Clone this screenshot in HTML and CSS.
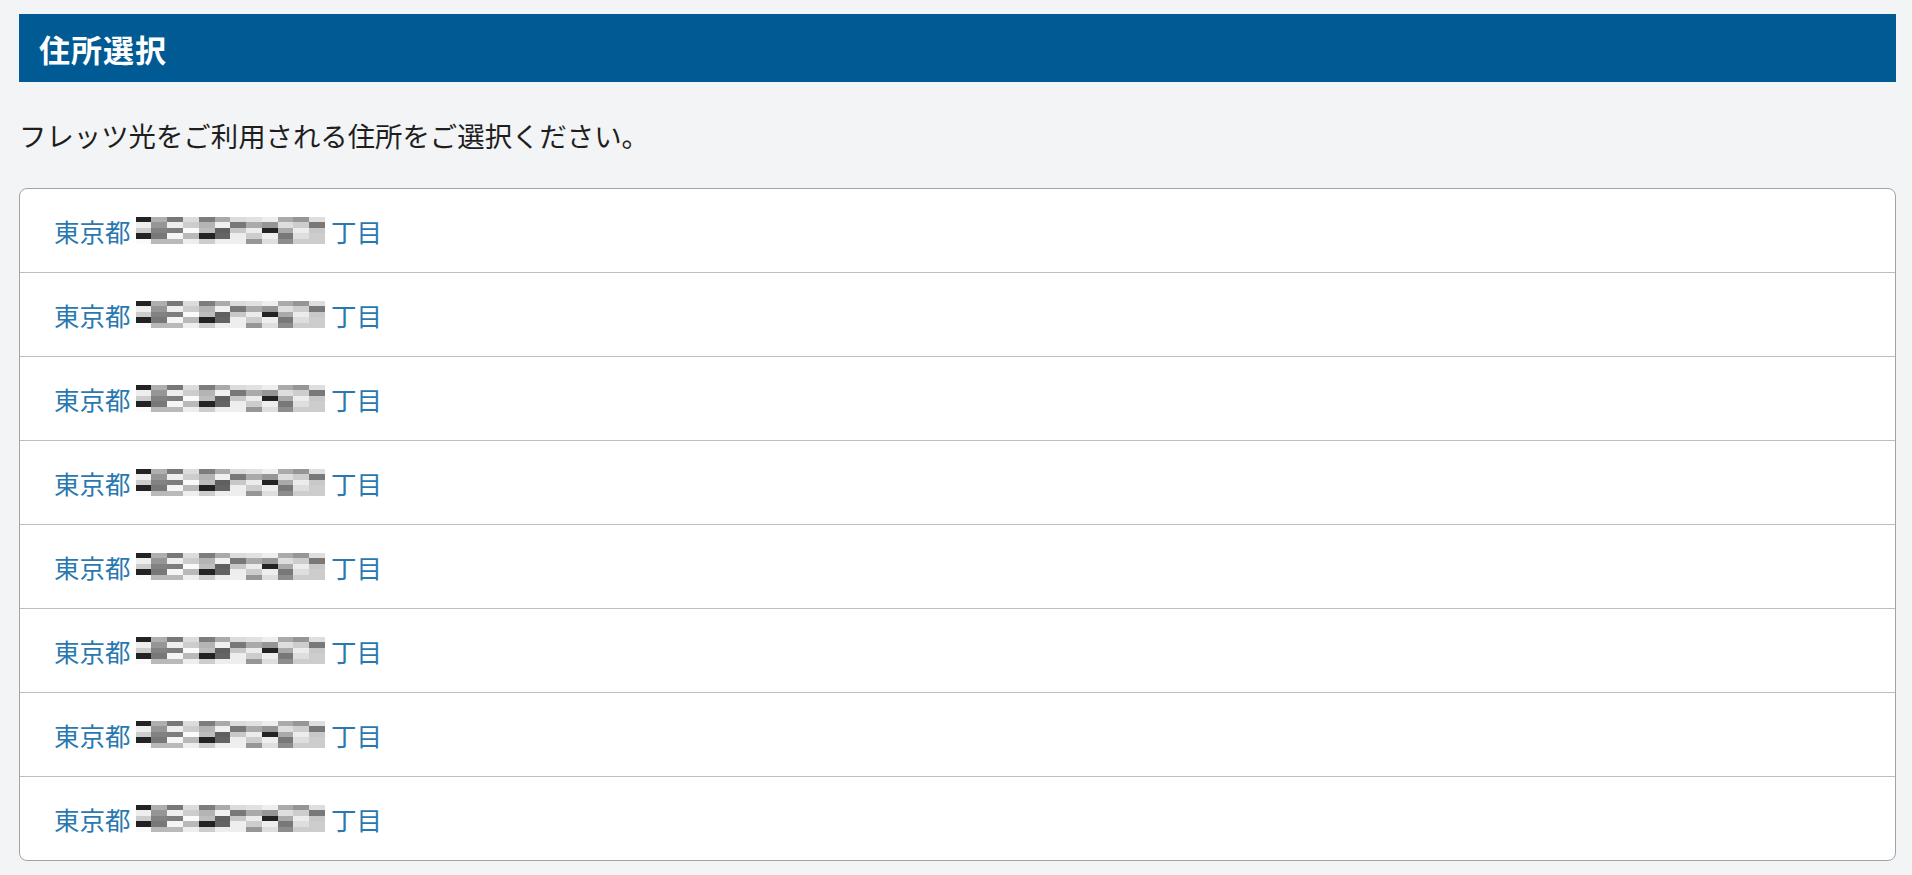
FILE: index.html
```html
<!DOCTYPE html>
<html lang="ja">
<head>
    <meta charset="UTF-8">
    <meta name="viewport" content="width=device-width, initial-scale=1.0">
    <title>住所選択</title>
    <link rel="stylesheet" href="styles.css">
</head>
<body>

    <div class="page">
        <header class="page-title">
            <h1>住所選択</h1>
        </header>

        <p class="lead">フレッツ光をご利用される住所をご選択ください。</p>

        <!-- Address candidates -->
        <ul class="address-list" id="addressList"></ul>
    </div>

    <script>
        // masked part of the address (grey levels, 12 x 5 cells)
        var mask = [
            [35, 175, 120, 220, 125, 170, 220, 225, 238, 170, 150, 222],
            [238, 150, 238, 205, 180, 240, 120, 170, 150, 222, 205, 120],
            [205, 130, 125, 250, 190, 95, 200, 236, 35, 170, 236, 200],
            [35, 120, 245, 185, 35, 100, 238, 205, 238, 120, 222, 205],
            [250, 185, 185, 238, 205, 238, 238, 150, 222, 140, 205, 205]
        ];

        function buildMask() {
            var box = document.createElement("span");
            box.className = "mask";
            mask.forEach(function (row) {
                row.forEach(function (v) {
                    var cell = document.createElement("i");
                    cell.style.background = "rgb(" + v + "," + v + "," + v + ")";
                    box.appendChild(cell);
                });
            });
            return box;
        }

        function addAddress(pref, rest) {
            var li = document.createElement("li");
            var a = document.createElement("a");
            a.href = "#";
            a.appendChild(document.createTextNode(pref));
            a.appendChild(buildMask());
            a.appendChild(document.createTextNode(rest));
            li.appendChild(a);
            document.getElementById("addressList").appendChild(li);
        }

        for (var i = 0; i < 8; i++) {
            addAddress("東京都", "丁目");
        }
    </script>

</body>
</html>
```

FILE: styles.css
```css
body {
    margin: 0;
    padding: 0;
    background-color: #f3f4f6;
    font-family: "Noto Sans CJK JP", "Noto Sans", sans-serif;
    color: #222;
}

.page {
    display: flex;
    flex-direction: column;
    padding: 14px 16px 0 19px;
}

.page-title {
    background-color: #005a93;
    height: 68px;
    display: flex;
    align-items: center;
    padding-left: 20px;
}
.page-title h1 {
    margin: 0;
    color: #fff;
    font-size: 31px;
    font-weight: bold;
    letter-spacing: 1px;
}

.lead {
    margin: 33px 0 33px 0;
    font-size: 27.4px;
    line-height: 40px;
    color: #1e1e1e;
}

.address-list {
    list-style: none;
    margin: 0;
    padding: 0;
    background: #fff;
    border: 1px solid #a3a3a3;
    border-radius: 8px;
}
.address-list li {
    height: 83px;
    display: flex;
    align-items: center;
    padding-left: 34px;
    border-top: 1px solid #bdbdbd;
}
.address-list li:first-child {
    border-top: none;
}
.address-list a {
    display: flex;
    align-items: center;
    color: #2a78b0;
    font-size: 25.5px;
    text-decoration: none;
}

.mask {
    display: grid;
    grid-template-columns: repeat(12, 15.8px);
    grid-template-rows: repeat(5, 5.6px);
    margin: 0 6px 0 5px;
    filter: blur(0.4px);
}
.mask i {
    display: block;
}
```
